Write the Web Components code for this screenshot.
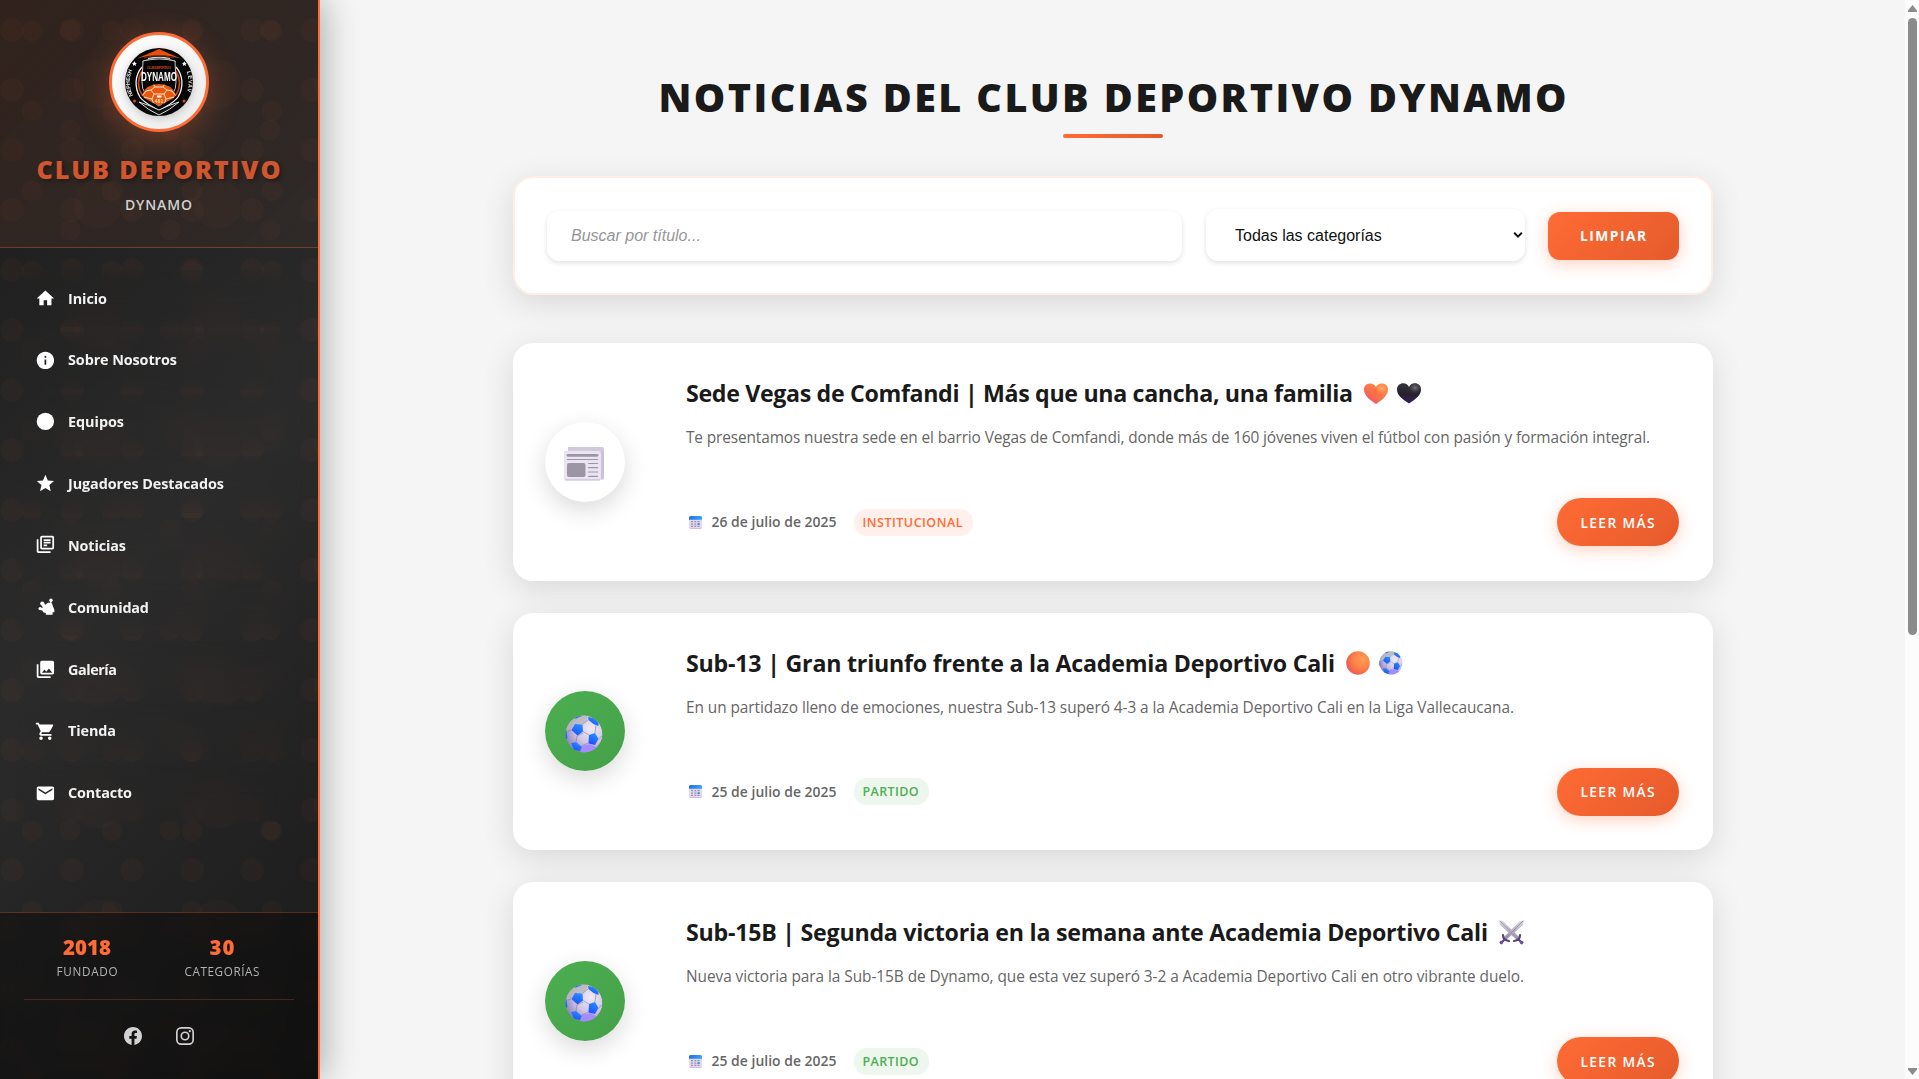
<!DOCTYPE html>
<html lang="es">
<head>
<meta charset="utf-8">
<title>Noticias - Club Deportivo Dynamo</title>
<style>
html,body{margin:0;height:100%;overflow:hidden}
body{background:#f5f5f5;font-family:"Open Sans","Noto Sans",sans-serif;color:#1a1a1a}
</style>
</head>
<body>
<club-app></club-app>
<script>
const define = (name, html, setup) => customElements.define(name, class extends HTMLElement {
  connectedCallback() {
    if (this.shadowRoot) return;
    const root = this.attachShadow({mode: 'open'});
    root.innerHTML = typeof html === 'function' ? html(this) : html;
    if (setup) setup(this, root);
  }
});

/* A single line of text tracked to occupy a given width. */
define('fit-text', '<style>:host{display:inline-block;white-space:nowrap;flex:none}span{display:inline-block;margin-left:-1px}</style><span><slot></slot></span>',
  (el, root) => {
    const w = +el.getAttribute('w'), s = root.querySelector('span');
    const n = [...el.textContent].length;
    s.style.letterSpacing = '0px';
    const nat = s.getBoundingClientRect().width;
    s.style.letterSpacing = ((w + 1 - nat) / (n - 1)) + 'px';
    el.style.width = w + 'px';
  });

const ICONS = {
  home: '<path d="M10 20v-6h4v6h5v-8h3L12 3 2 12h3v8z"/>',
  info: '<path d="M12 2C6.48 2 2 6.48 2 12s4.48 10 10 10 10-4.48 10-10S17.52 2 12 2zm1 15h-2v-6h2v6zm0-8h-2V7h2v2z"/>',
  team: '<circle cx="12" cy="12" r="10"/>',
  star: '<path d="M12 17.27L18.18 21l-1.64-7.03L22 9.24l-7.19-.61L12 2 9.19 8.63 2 9.24l5.46 4.73L5.82 21z"/>',
  news: '<path d="M4 6H2v14c0 1.1.9 2 2 2h14v-2H4V6zm16-4H8c-1.1 0-2 .9-2 2v12c0 1.1.9 2 2 2h12c1.1 0 2-.9 2-2V4c0-1.1-.9-2-2-2zm0 14H8V4h12v12zM10 9h8v2h-8zm0 3h4v2h-4zm0-6h8v2h-8z"/>',
  people: '<circle cx="18.4" cy="3.800" r="2"/><circle cx="8.4" cy="7.6" r="2.4"/><circle cx="6" cy="13.4" r="2"/><path d="M17.600 5h1.4v3h-1.4zM7 8l3-1 1.8 2L14 7.3l2-.9 3.5.8 1 3 2 5-.3 2.300h-1.900V20.500h-7.800V18.500l-2.500-.5-1.500-2-3-1.500 1-1.800 2.500-.4z"/>',
  gallery: '<path d="M22 16V4c0-1.100-.9-2-2-2H8c-1.100 0-2 .9-2 2v12c0 1.100.9 2 2 2h12c1.100 0 2-.9 2-2zm-11-4l2.030 2.710L16 11l4 5H8l3-4zM2 6v14c0 1.100.9 2 2 2h14v-2H4V6H2z"/>',
  cart: '<path d="M7 18c-1.100 0-1.990.9-1.990 2S5.900 22 7 22s2-.9 2-2-.9-2-2-2zM1 2v2h2l3.600 7.590-1.350 2.450c-.16.28-.25.61-.25.96 0 1.100.9 2 2 2h12v-2H7.420c-.14 0-.25-.11-.25-.25l.03-.12.9-1.630h7.450c.75 0 1.410-.41 1.750-1.030l3.580-6.490A1.003 1.003 0 0 0 20 4H5.210l-.94-2H1zm16 16c-1.100 0-1.990.9-1.990 2s.89 2 1.990 2 2-.9 2-2-.9-2-2-2z"/>',
  mail: '<path d="M20 4H4c-1.100 0-1.990.9-1.990 2L2 18c0 1.100.9 2 2 2h16c1.100 0 2-.9 2-2V6c0-1.100-.9-2-2-2zm0 4l-8 5-8-5V6l8 5 8-5v2z"/>',
  facebook: '<path d="M24 12.073c0-6.627-5.373-12-12-12s-12 5.373-12 12c0 5.990 4.388 10.954 10.125 11.854v-8.385H7.078v-3.470h3.047V9.430c0-3.007 1.792-4.669 4.533-4.669 1.312 0 2.686.235 2.686.235v2.953H15.830c-1.491 0-1.956.925-1.956 1.874v2.250h3.328l-.532 3.470h-2.796v8.385C19.612 23.027 24 18.062 24 12.073z"/>',
  instagram: '<g fill="none" stroke="currentColor" stroke-width="2.200"><rect x="1.100" y="1.100" width="21.800" height="21.800" rx="5.800"/><circle cx="12" cy="12" r="5"/></g><circle cx="18.400" cy="5.600" r="1.500"/>'
};
const EMOJI = {
  paper: `<defs><linearGradient id="g" x2="0" y2="1"><stop stop-color="#cfc8d8"/><stop offset="1" stop-color="#e8e0ee"/></linearGradient></defs>
    <path d="M4 0h34a2 2 0 0 1 2 2v29a2 2 0 0 1-2 2H4z" fill="url(#g)"/><path d="M37 4h3v27a2 2 0 0 1-3 1z" fill="#cbc2d6"/><path d="M0 4h34a3 3 0 0 1 3 3v26H1a1 1 0 0 1-1-1z" fill="#eae4f2"/><path d="M1 33h35" stroke="#c3aeda" stroke-width="1.200"/>
    <g stroke="#9c95a4" stroke-linecap="round"><path d="M4 8.300h29" stroke-width="2.800"/><path d="M3.500 12.500h30" stroke-width="1.200"/><path d="M24.500 16.500h9M24.500 20.700h9M24.500 25h9M24.500 29.300h9" stroke-width="1.200"/></g><rect x="3" y="16" width="18.500" height="14" rx="2" fill="#9c95a4"/>`,
  ball: `<defs><radialGradient id="g" cx=".68" cy=".35" r=".75"><stop stop-color="#eeeaf2"/><stop offset=".55" stop-color="#cfc5e4"/><stop offset="1" stop-color="#8d7fb8"/></radialGradient><linearGradient id="b" x1=".8" y1="0" x2=".3" y2="1"><stop stop-color="#2b90ff"/><stop offset="1" stop-color="#1b50ff"/></linearGradient><clipPath id="c"><circle cx="19" cy="19" r="18.500"/></clipPath></defs>
    <g clip-path="url(#c)"><circle cx="19" cy="19" r="18.500" fill="url(#g)"/><path d="M0 16L2 8 10 0h13l-1 5-4 4-8 0-4 6z" fill="#b8b7bd" opacity=".8"/><path d="M16 38l1-7 8-2 8 4-8 6z" fill="#a58bff"/>
    <g fill="url(#b)"><path d="M10 9l7.500.5.500 7-5.500 4-6-5.500z"/><path d="M24 20l6-2 3.500 6-3.500 6-6.500-1.500z"/><path d="M23 2l6 1 4.500 5 0 3-5-2-5-4z"/><path d="M6 28l5-1 6 5-2 4-6-1z"/><path d="M0 16l1.500-1 1 8-2.500 2z"/><path d="M9 3l4-3 4 1-6 2.500z"/></g>
    <g fill="none" stroke="#77718f" stroke-width=".5"><path d="M17.500 9.500l5.500-4.500M18 16.500l6 3.500M12 21l-1 6M6 15l-3 1M17 31l6-3M33.500 24l3.500-3M30 18l1-8M12 21l6-3"/></g></g>`,
  heart: `<defs><linearGradient id="g" x1=".1" y1=".9" x2=".8" y2=".1"><stop stop-color="#ff4a6c"/><stop offset=".4" stop-color="#f66c4e"/><stop offset="1" stop-color="#ff8d48"/></linearGradient><radialGradient id="h" cx=".72" cy=".25" r=".3"><stop stop-color="#ffb072"/><stop offset="1" stop-color="#ff8040" stop-opacity="0"/></radialGradient></defs>
    <path d="M12 21C5 16.500 0 12 0 6.500 0 2.500 3 .5 6.200.5 9 .5 11 2 12 4c1-2 3-3.500 5.800-3.500C21 .5 24 2.500 24 6.500 24 12 19 16.500 12 21z" fill="url(#g)"/><path d="M12 21C5 16.500 0 12 0 6.500 0 2.500 3 .5 6.200.5 9 .5 11 2 12 4c1-2 3-3.500 5.800-3.500C21 .5 24 2.500 24 6.500 24 12 19 16.500 12 21z" fill="url(#h)"/><path d="M12 4l1 6-1.500 4-1-7z" fill="#ff6a20" opacity=".7"/>`,
  dark: `<defs><linearGradient id="g" x2="0" y2="1"><stop stop-color="#35343a"/><stop offset=".55" stop-color="#26202f"/><stop offset="1" stop-color="#3d1c5c"/></linearGradient><radialGradient id="h" cx=".75" cy=".22" r=".32"><stop stop-color="#77757c"/><stop offset="1" stop-color="#333" stop-opacity="0"/></radialGradient></defs>
    <path d="M12 20.500C5 16 0 12 0 6.500 0 2.500 3 .3 6.200.3 9 .3 11 2 12 4c1-2 3-3.700 5.800-3.700C21 .3 24 2.500 24 6.500 24 12 19 16 12 20.500z" fill="url(#g)"/><path d="M12 20.500C5 16 0 12 0 6.500 0 2.500 3 .3 6.200.3 9 .3 11 2 12 4c1-2 3-3.700 5.800-3.700C21 .3 24 2.500 24 6.500 24 12 19 16 12 20.500z" fill="url(#h)"/>`,
  orange: `<defs><radialGradient id="g" cx=".68" cy=".35" r=".75"><stop stop-color="#ffa055"/><stop offset=".5" stop-color="#fd8148"/><stop offset=".85" stop-color="#ee654c"/><stop offset="1" stop-color="#f4557a"/></radialGradient></defs><circle cx="12" cy="12" r="11.800" fill="url(#g)"/>`,
  swords: `<defs><linearGradient id="g" x2="0" y2="1"><stop stop-color="#dcd8e0"/><stop offset="1" stop-color="#9b90a8"/></linearGradient></defs>
    <path d="M0 0l4.500 1.500L20 17l-2.500 2.500L1 5z" fill="url(#g)"/><path d="M25 0l-4.500 1.500L5 17l2.500 2.500L24 5z" fill="url(#g)"/><path d="M1 1l17 17" stroke="#9d95aa" stroke-width=".8"/><path d="M24 1L7 18" stroke="#8d849b" stroke-width=".8"/>
    <g stroke="#5b4475" stroke-width="2.200" stroke-linecap="round" fill="none"><path d="M4 15c0 3.500 2 5.500 6 6M21 15c0 3.500-2 5.500-6 6"/><path d="M5.500 19.500l-3 3M19.500 19.500l3 3"/></g><circle cx="2.300" cy="22.600" r="1.800" fill="#6950a0"/><circle cx="22.700" cy="22.600" r="1.800" fill="#6950a0"/>`,
  calendar: `<defs><linearGradient id="g" x2="1" y2="0"><stop stop-color="#2370e8"/><stop offset="1" stop-color="#35a4ff"/></linearGradient></defs><rect width="13" height="13" rx="1.600" fill="#e2d8ef"/><path d="M0 3.700V1.600A1.600 1.600 0 0 1 1.600 0h9.800A1.600 1.600 0 0 1 13 1.600v2.100z" fill="url(#g)"/><path d="M1 12.600h11" stroke="#cfa9e4" stroke-width=".8"/><g fill="#9a92a8"><path d="M2 5h2v1.300H2zM5.300 5h2v1.300h-2zM8.500 5h2v1.300h-2zM2 7.400h2v1.300H2zM5.300 7.400h2v1.300h-2zM2 9.800h2v1.300H2zM5.300 9.800h2v1.300h-2zM8.500 9.800h2v1.300h-2z"/></g><rect x="8.500" y="7.200" width="2.200" height="1.800" fill="#2b8cf5"/>`
};
const EBOX = {paper:[40,34], ball:[38,38], heart:[24,21], dark:[24,21], orange:[24,24], swords:[25,25], calendar:[13,13]};

define('ui-icon', el => {
  const s = el.getAttribute('size');
  return `<style>:host{display:block;flex:none;width:${s}px;height:${s}px}svg{display:block;width:100%;height:100%;fill:currentColor;overflow:visible}</style><svg viewBox="0 0 24 24">${ICONS[el.getAttribute('name')]}</svg>`;
});
define('emoji-art', el => {
  const n = el.getAttribute('name'), [w, h] = EBOX[n], k = +(el.getAttribute('scale') || 1);
  return `<style>:host{display:block;flex:none;width:${w*k}px;height:${h*k}px}svg{display:block}</style><svg width="${w*k}" height="${h*k}" viewBox="0 0 ${w} ${h}">${EMOJI[n]}</svg>`;
});

define('club-crest', `<style>
:host{display:flex;width:94px;height:94px;border:3px solid #ff6b35;border-radius:50%;background:linear-gradient(135deg,#fff,#ececec);align-items:center;justify-content:center;box-shadow:0 8px 32px rgba(255,107,53,.3);flex:none}
svg{display:block;filter:drop-shadow(0 2px 4px rgba(0,0,0,.2))}text{font-family:"Liberation Sans",sans-serif}
</style>
<svg width="70" height="70" viewBox="0 0 70 70">
<circle cx="35" cy="35" r="34" fill="#050505"/>
<path d="M13 11.500Q24 7 35 2Q46 7 57 11.500Q35 4.500 13 11.500z" fill="#e8500f"/><path d="M20 11Q35 6 50 11" stroke="#9c3a12" stroke-width=".8" fill="none"/>
<path d="M18 14.500Q35 7 52 14.500" stroke="#a9a9a9" stroke-width=".8" fill="none"/><path d="M24 11.500Q35 9 46 11.500" stroke="#ddd" stroke-width="1.200" fill="none"/>
<path d="M18 20C11 28 10 40 16 50C20 56 28 59 35 64C42 59 50 56 54 50C60 40 59 28 52 20" fill="none" stroke="#f3f3f3" stroke-width="1.300"/>
<path d="M18 24C14 31 13 40 18 48M52 24C56 31 57 40 52 48" fill="none" stroke="#c94a17" stroke-width="1.600"/>
<path d="M19 14Q35 10 51 14L52 35Q53 48 35 59Q17 48 18 35z" fill="#050505" stroke="#c9c9c9" stroke-width="1"/>
<path d="M15 55Q25 58 35 63Q45 58 55 55Q46 63 35 68Q24 63 15 55z" fill="#111" stroke="#ddd" stroke-width="1"/>
<clipPath id="k"><path d="M18 48Q22 37 35 37T52 48L50 51L35 59L20 51z"/></clipPath>
<g clip-path="url(#k)"><path d="M16 34h38v27H16z" fill="#e8590f"/><g fill="none" stroke="#fff0dc" stroke-width=".9"><path d="M31 40h8l4 3-3 4h-10l-3-4zM27 43l-5 1-4 5M43 43l5 1 4 5M30 47l-2 5-8-2M40 47l2 5 8-2M28 52l2 6M42 52l-2 6M31 40l-2-4M39 40l2-4"/></g><rect x="33" y="48.500" width="4.500" height="2" fill="#fff"/></g>
<text x="35" y="21.800" text-anchor="middle" font-size="3.300" font-weight="700" fill="#cf3d22" textLength="24">CLUB DEPORTIVO</text>
<text x="35" y="34.300" text-anchor="middle" font-size="12" font-weight="700" fill="#fff" textLength="36" lengthAdjust="spacingAndGlyphs">DYNAMO</text>
<path id="l" d="M9 48.500A29 29 0 0 1 9 22" fill="none"/><path id="r" d="M62 23A30 30 0 0 1 62 47" fill="none"/>
<text font-size="5.500" font-weight="700" fill="#e8e8e8"><textPath href="#l" textLength="26">NEPHESH</textPath></text>
<text font-size="5.500" font-weight="700" fill="#e8e8e8"><textPath href="#r" startOffset="2" textLength="20">LEVAV</textPath></text>
<g fill="#fff"><path d="M10.400 14.200l.8 1.600 1.600.2-1.200 1.200.4 1.700-1.600-.9-1.600.9.4-1.700L8 16l1.600-.2z"/><path d="M60.400 14.200l.8 1.600 1.600.2-1.200 1.200.4 1.700-1.600-.9-1.600.9.4-1.700L58 16l1.600-.2z"/></g>
<circle cx="10.500" cy="54" r="1.500" fill="#d84b1b"/><circle cx="60" cy="54" r="1.500" fill="#d84b1b"/>
<text x="35" y="56" text-anchor="middle" font-size="5" font-weight="700" fill="#ffdcb0">481</text>
</svg>`);

define('nav-item', el => `<style>
:host{display:flex;align-items:center;height:56.83px;margin:0 16px;padding:0 20px 0 19.2px;border-radius:12px;color:#fff;backdrop-filter:blur(14px);font-size:14.400px;font-weight:700;line-height:20px}
fit-text{margin-left:13px;color:#f2f2f2}
ui-icon{margin-top:${el.getAttribute('dy') || 0}px}
</style><ui-icon name="${el.getAttribute('icon')}" size="20.8"></ui-icon><fit-text w="${el.getAttribute('w')}">${el.getAttribute('label')}</fit-text>`);

define('club-sidebar', `<style>
:host{--d:rgba(255,107,53,.03);display:flex;flex-direction:column;box-sizing:border-box;width:320px;height:100%;flex:none;border-right:2px solid #ff6b35;
background:
radial-gradient(circle at 12px 30px,var(--d) 11.500px,transparent 12px) 0 0/60px 60px,
radial-gradient(circle at 32px 31px,var(--d) 10px,transparent 10.500px) 0 0/80px 80px,
radial-gradient(circle at 70px 30px,var(--d) 10px,transparent 10.500px) 0 0/100px 100px,
radial-gradient(circle at 98px 84px,rgba(255,107,53,.022) 24px,transparent 24.500px) 0 0/120px 120px,
linear-gradient(135deg,#1a1a1a,#2b2b2b 50%,#1a1a1a);
box-shadow:4px 0 32px rgba(0,0,0,.3);position:relative;z-index:1}
header{display:flex;flex-direction:column;align-items:center;height:247px;border-bottom:1px solid rgba(255,107,53,.3);background:linear-gradient(135deg,rgba(255,107,53,.1),rgba(255,107,53,.03))}
club-crest{margin-top:32px}
.n{margin-top:17px;height:40px;line-height:40px;font-size:25.200px;font-weight:800;color:#cf562e;text-shadow:2px 2px 4px rgba(0,0,0,.35)}
.d{margin-top:6px;line-height:20px;font-size:14px;font-weight:600;color:#d0d0d0}
nav{flex:1;display:flex;flex-direction:column;gap:5px;padding-top:22.200px}
footer{height:166px;border-top:1px solid rgba(255,107,53,.3);background:rgba(0,0,0,.36);backdrop-filter:blur(12px);padding:0 24px;display:flex;flex-direction:column}
.st{display:flex;height:86px;border-bottom:1px solid rgba(255,107,53,.22)}
.st div{width:127px;margin-right:8px;display:flex;flex-direction:column;align-items:center}
.st b{margin-top:21px;line-height:26px;font-size:20.400px;font-weight:800;color:#ff6b35}
.st span{line-height:18px;margin-top:2px;font-size:11.700px;color:#b3b3b3;font-weight:500}
.so{display:flex;justify-content:center;gap:34px;padding-top:27px;color:#d2d2d2}
</style>
<header><club-crest></club-crest><div class="n"><fit-text w="243">CLUB DEPORTIVO</fit-text></div><div class="d"><fit-text w="66">DYNAMO</fit-text></div></header>
<nav>
<nav-item icon="home" label="Inicio" w="38"></nav-item>
<nav-item icon="info" label="Sobre Nosotros" w="108"></nav-item>
<nav-item icon="team" label="Equipos" w="55" dy="-2"></nav-item>
<nav-item icon="star" label="Jugadores Destacados" w="155" dy="-2"></nav-item>
<nav-item icon="news" label="Noticias" w="57" dy="-3"></nav-item>
<nav-item icon="people" label="Comunidad" w="80" dy="-1"></nav-item>
<nav-item icon="gallery" label="Galería" w="48"></nav-item>
<nav-item icon="cart" label="Tienda" w="47"></nav-item>
<nav-item icon="mail" label="Contacto" w="63"></nav-item>
</nav>
<footer><div class="st"><div><b><fit-text w="47">2018</fit-text></b><span><fit-text w="60">FUNDADO</fit-text></span></div><div><b><fit-text w="24">30</fit-text></b><span><fit-text w="74">CATEGORÍAS</fit-text></span></div></div>
<div class="so"><ui-icon name="facebook" size="18"></ui-icon><ui-icon name="instagram" size="18"></ui-icon></div></footer>`);

define('news-filter', `<style>
:host{display:flex;box-sizing:border-box;width:1200px;height:119px;padding:0 32px;align-items:center;background:#fff;border:2px solid #ffede6;border-radius:20px;box-shadow:0 8px 32px rgba(0,0,0,.12);font:16px "Liberation Sans",Arial,sans-serif}
.f{box-sizing:border-box;display:flex;align-items:center;border-radius:12px;background:#fff;box-shadow:0 2px 5px rgba(0,0,0,.12)}
.i{width:635px;height:50px;padding-left:24px;color:#969696;font-style:italic}
.s{margin-left:24px;width:319px;height:52px;margin-top:-1px;padding:0 2px 0 29px;justify-content:space-between;color:#111}
.s span{margin-top:1px}
.b{margin-left:23px;width:131px;height:48px;border-radius:12px;background:linear-gradient(135deg,#ff6b35,#e55a2b);box-shadow:0 4px 16px rgba(255,107,53,.3);color:#fff;display:flex;align-items:center;justify-content:center;font:700 13.800px "Open Sans",sans-serif}
</style><div class="f i">Buscar por título...</div><div class="f s"><span>Todas las categorías</span><svg width="10" height="8" viewBox="0 0 10 8"><path d="M1.200 1.800L5 5.600l3.800-3.800" fill="none" stroke="#111" stroke-width="2"/></svg></div><div class="b"><fit-text w="65">LIMPIAR</fit-text></div>`);

define('news-card', el => {
  const a = k => el.getAttribute(k);
  const green = a('kind') === 'ball';
  return `<style>
:host{display:flex;box-sizing:border-box;width:1200px;height:237.600px;padding:0 34px 0 32px;align-items:center;background:#fff;border-radius:20px;box-shadow:0 8px 32px rgba(0,0,0,.12);flex:none}
.c{box-sizing:border-box;width:80px;height:80px;border-radius:50%;display:flex;justify-content:center;align-items:center;padding:5px 2px 0 0;box-shadow:0 8px 24px rgba(0,0,0,.15);background:${green ? 'linear-gradient(135deg,#4caf50,#45a049)' : '#fff'}}
.m{margin-left:62px;flex:1;height:100%;display:flex;flex-direction:column}
.t{margin-top:32px;height:36px;display:flex;align-items:center;font-size:23.200px;font-weight:700;line-height:36px;color:#1a1a1a}
.t emoji-art:first-of-type{margin-left:11px}.t emoji-art+emoji-art{margin-left:9px}
.p{margin-top:14px;line-height:26px;font-size:15.400px;color:#666}
.r{margin-top:auto;margin-bottom:34.500px;display:flex;align-items:center;height:48px}
.d{margin-left:11px;font-size:13.900px;font-weight:600;color:#666;line-height:20px}
.g{margin-left:17px;height:27px;padding:0 10px;border-radius:13px;display:flex;align-items:center;font-size:12.500px;font-weight:600;background:${green ? '#edf7ee' : '#fff0eb'};color:${green ? '#4caf50' : '#ff6b35'}}
.b{margin-left:auto;width:122px;height:48px;border-radius:24px;background:linear-gradient(135deg,#ff6b35,#e55a2b);box-shadow:0 4px 16px rgba(255,107,53,.3);color:#fff;display:flex;align-items:center;justify-content:center;font-size:13.800px;font-weight:600}
emoji-art[name=calendar]{margin-left:1.500px}
</style><div class="c"><emoji-art name="${a('kind')}"></emoji-art></div>
<div class="m"><div class="t"><fit-text w="${a('tw')}">${a('heading')}</fit-text>${a('art').split(' ').map(n => `<emoji-art name="${n}" scale="${n === 'ball' ? .63 : 1}"></emoji-art>`).join('')}</div>
<div class="p"><fit-text w="${a('pw')}">${a('text')}</fit-text></div>
<div class="r"><emoji-art name="calendar"></emoji-art><fit-text class="d" w="124">${a('date')}</fit-text><div class="g"><fit-text w="${a('gw')}">${a('tag')}</fit-text></div><div class="b"><fit-text w="73">LEER MÁS</fit-text></div></div></div>`;
});

define('scroll-rail', `<style>
:host{display:flex;flex-direction:column;align-items:center;justify-content:space-between;box-sizing:border-box;width:14px;height:100%;background:#fcfcfc;flex:none;padding:5px 0 4px 1px}
.t{width:9px;height:617px;border-radius:5px;background:#8b8b8b;margin:6px 0 auto}svg{display:block;fill:#8b8b8b}
</style><svg width="9" height="7"><path d="M4.500 0L9 5.500V7H0V5.500z"/></svg><div class="t"></div><svg width="9" height="7"><path d="M4.500 7L9 1.500V0H0v1.500z"/></svg>`);

define('club-app', `<style>
:host{display:flex;width:100%;height:100vh;overflow:hidden}
main{flex:1;display:flex;flex-direction:column;align-items:center;min-width:0;overflow:hidden;padding-left:1px}
h1{margin:69px 0 0;font-size:39.500px;font-weight:800;line-height:56px;height:65px;flex:none}
.u{width:100px;height:4px;border-radius:2px;background:linear-gradient(135deg,#ff6b35,#e55a2b);flex:none}
news-filter{margin-top:38px;flex:none}
.l{margin-top:48px;display:flex;flex-direction:column;gap:32px}
</style>
<club-sidebar></club-sidebar>
<main><h1><fit-text w="907">NOTICIAS DEL CLUB DEPORTIVO DYNAMO</fit-text></h1><div class="u"></div>
<news-filter></news-filter>
<div class="l">
<news-card kind="paper" tw="666" pw="963" gw="99" art="heart dark" heading="Sede Vegas de Comfandi | Más que una cancha, una familia" text="Te presentamos nuestra sede en el barrio Vegas de Comfandi, donde más de 160 jóvenes viven el fútbol con pasión y formación integral." date="26 de julio de 2025" tag="INSTITUCIONAL"></news-card>
<news-card kind="ball" tw="648" pw="827" gw="55" art="orange ball" heading="Sub-13 | Gran triunfo frente a la Academia Deportivo Cali" text="En un partidazo lleno de emociones, nuestra Sub-13 superó 4-3 a la Academia Deportivo Cali en la Liga Vallecaucana." date="25 de julio de 2025" tag="PARTIDO"></news-card>
<news-card kind="ball" tw="801" pw="837" gw="55" art="swords" heading="Sub-15B | Segunda victoria en la semana ante Academia Deportivo Cali" text="Nueva victoria para la Sub-15B de Dynamo, que esta vez superó 3-2 a Academia Deportivo Cali en otro vibrante duelo." date="25 de julio de 2025" tag="PARTIDO"></news-card>
</div></main>
<scroll-rail></scroll-rail>`);
</script>
</body>
</html>
